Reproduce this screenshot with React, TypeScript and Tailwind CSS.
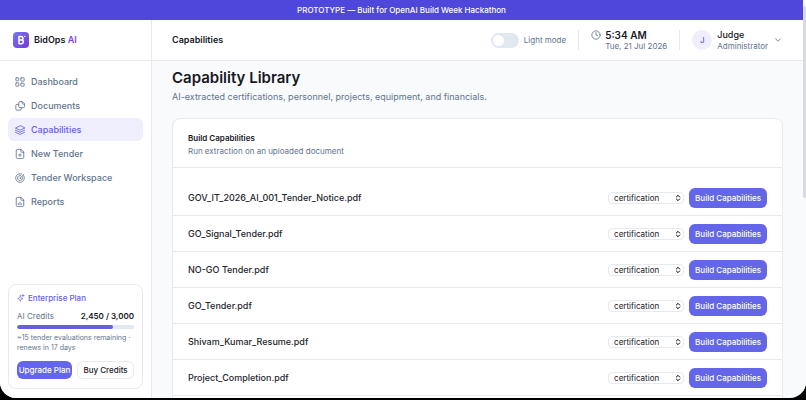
import { ReactNode } from "react";
import { ChevronDown, ChevronsUpDown, Clock } from "lucide-react";

const files = [
  "GOV_IT_2026_AI_001_Tender_Notice.pdf",
  "GO_Signal_Tender.pdf",
  "NO-GO Tender.pdf",
  "GO_Tender.pdf",
  "Shivam_Kumar_Resume.pdf",
  "Project_Completion.pdf",
];

const Icon = ({ children, className = "size-[10px]" }: { children: ReactNode; className?: string }) => (
  <svg
    viewBox="0 0 24 24"
    fill="none"
    stroke="currentColor"
    strokeWidth="2"
    strokeLinecap="round"
    strokeLinejoin="round"
    aria-hidden="true"
    className={`shrink-0 ${className}`}
  >
    {children}
  </svg>
);

const page = "M14 1H6a3 3 0 0 0-3 3v16a3 3 0 0 0 3 3h12a3 3 0 0 0 3-3V8zv4a3 3 0 0 0 3 3h4";

const nav = [
  {
    label: "Dashboard",
    icon: (
      <>
        <rect x="2" y="2" width="7" height="7" rx="1" />
        <rect x="14" y="2" width="8" height="8" rx="1" />
        <rect x="2" y="14" width="7" height="8" rx="1" />
        <rect x="14" y="15" width="8" height="7" rx="1" />
      </>
    ),
  },
  {
    label: "Documents",
    icon: (
      <>
        <path d="M17 1.500h-5a3 3 0 0 0-3 3V13a3 3 0 0 0 3 3h8a3 3 0 0 0 3-3V7.500zv3a3 3 0 0 0 3 3h3" />
        <path d="M9 8H5a3 3 0 0 0-3 3v8a3 3 0 0 0 3 3h7a3 3 0 0 0 3-3v-3" />
      </>
    ),
  },
  {
    label: "Capabilities",
    icon: (
      <>
        <path d="M12 2 1 7.500l11 5 11-5z" />
        <path d="m1 12.500 11 5 11-5" />
        <path d="m1 17.500 11 5 11-5" />
      </>
    ),
  },
  {
    label: "New Tender",
    icon: (
      <>
        <path d={page} />
        <path d="M12 11.500v6M9 14.500h6" />
      </>
    ),
  },
  {
    label: "Tender Workspace",
    icon: (
      <>
        <path d="M21 6.500A10.500 10.500 0 1 1 16.500 2.500" />
        <path d="M17.500 9.500A6 6 0 1 1 13.500 6.200" />
        <path d="m12 12 9-8M12 12l3 3" />
      </>
    ),
  },
  {
    label: "Reports",
    icon: (
      <>
        <path d={page} />
        <path d="M8 18.500v-3M12 18.500v-6M16 18.500v-2" />
      </>
    ),
  },
];

const Logo = () => (
  <svg viewBox="0 0 16 16" className="size-4" aria-hidden="true">
    <defs>
      <linearGradient id="logo" x1="0" y1="0" x2="1" y2="1">
        <stop offset="0" stopColor="#7479ee" />
        <stop offset="1" stopColor="#7438dc" />
      </linearGradient>
    </defs>
    <rect width="16" height="16" rx="4" fill="url(#logo)" />
    <path
      d="M6 4.500v7.200h2.600a1.900 1.900 0 0 0 .4-3.700 1.800 1.800 0 0 0-.8-3.400zM6 8h2.600"
      fill="none"
      stroke="#fff"
      strokeWidth="1.500"
      strokeLinejoin="round"
    />
    <circle cx="11.800" cy="4.400" r=".7" fill="#fff" />
  </svg>
);

const Sidebar = () => (
  <aside className="flex w-38 shrink-0 flex-col border-r border-[#e7e9ef] bg-white">
    <div className="flex h-[41px] shrink-0 items-center gap-[5px] border-b border-[#e7e9ef] px-[13px] text-[9px] font-semibold text-[#17181f]">
      <Logo />
      <span>
        BidOps <span className="text-[#7c3fe4]">AI</span>
      </span>
    </div>
    <nav className="flex flex-1 flex-col gap-px px-2 pt-[9px]">
      {nav.map(({ label, icon }) => (
        <a
          key={label}
          href="#"
          aria-current={label === "Capabilities" ? "page" : undefined}
          className="flex h-[23px] items-center gap-[6px] rounded-md px-[7px] text-[9px] font-medium text-slate-500 aria-[current]:bg-[#efeefd] aria-[current]:text-[#6160e6]"
        >
          <Icon>{icon}</Icon>
          {label}
        </a>
      ))}
    </nav>
    <section className="mx-2 mb-[9px] rounded-lg border border-[#e7e9ef] px-2 pt-[7px] pb-[9px] text-[8px]">
      <h2 className="flex items-center gap-[3px] leading-3 font-medium text-[#6160e6]">
        <Icon className="size-2">
          <path d="M10 5c1 6 2 7 8 9-6 1-7 2-8 8-1-6-2-7-8-8 6-2 7-3 8-9zM18 1v7M14.500 4.500h7" />
        </Icon>
        Enterprise Plan
      </h2>
      <div className="mt-[6px] flex justify-between leading-3">
        <label htmlFor="credits" className="text-slate-500">AI Credits</label>
        <span className="font-semibold text-[#17181f]">2,450 / 3,000</span>
      </div>
      <progress
        id="credits"
        value={2450}
        max={3000}
        className="mt-[3px] block h-1 w-full appearance-none overflow-hidden rounded-full [&::-webkit-progress-bar]:bg-slate-200 [&::-webkit-progress-value]:rounded-full [&::-webkit-progress-value]:bg-[#6160e6]"
      />
      <p className="mt-1 text-[7px] leading-[10px] text-slate-500">
        ~15 tender evaluations remaining · renews in 17 days
      </p>
      <div className="mt-2 flex gap-[5px] font-medium whitespace-nowrap">
        <button className="h-[18px] flex-1 rounded-md bg-[#6366e8] text-white">Upgrade Plan</button>
        <button className="h-[18px] flex-1 rounded-md border border-[#e7e9ef] text-[#17181f]">Buy Credits</button>
      </div>
    </section>
  </aside>
);

const Header = () => (
  <header className="flex h-[41px] shrink-0 items-center border-b border-[#e7e9ef] bg-white px-5">
    <h2 className="flex-1 text-[9px] font-semibold text-[#17181f]">Capabilities</h2>
    <label className="flex items-center gap-[5px] text-[8px] text-slate-500">
      <input
        type="checkbox"
        role="switch"
        className="h-[15px] w-7 appearance-none rounded-full bg-slate-200 p-[2px] before:block before:size-[11px] before:rounded-full before:bg-white checked:before:ml-auto"
      />
      Light mode
    </label>
    <div className="ml-3 flex h-5 items-center gap-1 border-l border-[#e7e9ef] pl-3">
      <Clock className="mb-[10px] size-[10px] text-slate-500" />
      <div>
        <p className="text-[10px] leading-3 font-semibold text-[#17181f]">5:34 AM</p>
        <p className="text-[8px] leading-[10px] text-slate-500">Tue, 21 Jul 2026</p>
      </div>
    </div>
    <button className="ml-3 flex h-5 items-center gap-[5px] border-l border-[#e7e9ef] pl-3 text-left">
      <span className="flex size-5 items-center justify-center rounded-full bg-[#efeefd] text-[8px] font-medium text-[#6160e6]">
        J
      </span>
      <span>
        <span className="block text-[9px] leading-3 font-medium text-[#17181f]">Judge</span>
        <span className="block text-[8px] leading-[10px] text-slate-500">Administrator</span>
      </span>
      <ChevronDown className="size-[10px] text-slate-500" />
    </button>
  </header>
);

const FileRow = ({ name }: { name: string }) => (
  <li className="flex h-9 items-center gap-[5px] border-b border-[#e7e9ef] px-[15px]">
    <span className="flex-1 text-[9px] font-medium text-[#25262d]">{name}</span>
    <div className="relative">
      <select
        aria-label={`Capability type for ${name}`}
        className="block h-3 w-19 appearance-none rounded-sm border border-[#e7e9ef] bg-white px-[5px] text-[8px] leading-[10px] text-[#17181f]"
      >
        <option>certification</option>
        <option>personnel</option>
        <option>project</option>
        <option>equipment</option>
        <option>financial</option>
      </select>
      <ChevronsUpDown className="pointer-events-none absolute top-[2px] right-[2px] size-2" strokeWidth={3} />
    </div>
    <button className="h-5 rounded-md bg-[#6366e8] px-[6px] text-[8px] font-medium text-white">Build Capabilities</button>
  </li>
);

export default function App() {
  return (
    <div className="h-screen bg-black pb-[2px] font-['Inter',sans-serif]">
      <div className="flex h-full overflow-hidden rounded-b-2xl bg-slate-50">
        <div className="flex min-w-0 flex-1 flex-col">
          <div className="h-5 shrink-0 bg-[#4f46dc] text-center text-[8px] leading-5 font-medium text-white">
            PROTOTYPE — Built for OpenAI Build Week Hackathon
          </div>
          <div className="flex min-h-0 flex-1">
            <Sidebar />
            <div className="flex min-w-0 flex-1 flex-col">
              <Header />
              <main className="min-h-0 flex-1 overflow-hidden px-5 pt-[7px]">
                <h1 className="text-[15px] leading-5 font-semibold text-[#17181f]">Capability Library</h1>
                <p className="mt-[3px] text-[9px] leading-3 text-slate-500">
                  AI-extracted certifications, personnel, projects, equipment, and financials.
                </p>
                <section className="mt-[15px] rounded-lg border border-[#e7e9ef] bg-white">
                  <div className="border-b border-[#e7e9ef] px-[15px] pt-3 pb-[10px]">
                    <h3 className="text-[8px] leading-[14px] font-semibold text-[#17181f]">Build Capabilities</h3>
                    <p className="text-[8px] leading-3 text-slate-500">Run extraction on an uploaded document</p>
                  </div>
                  <ul className="py-3">
                    {files.map((name) => (
                      <FileRow key={name} name={name} />
                    ))}
                  </ul>
                </section>
              </main>
            </div>
          </div>
        </div>
        <div className="w-[3px] shrink-0 bg-slate-50">
          <div className="mt-[6px] h-48 rounded-full bg-[#d9dae0]" />
        </div>
      </div>
    </div>
  );
}
